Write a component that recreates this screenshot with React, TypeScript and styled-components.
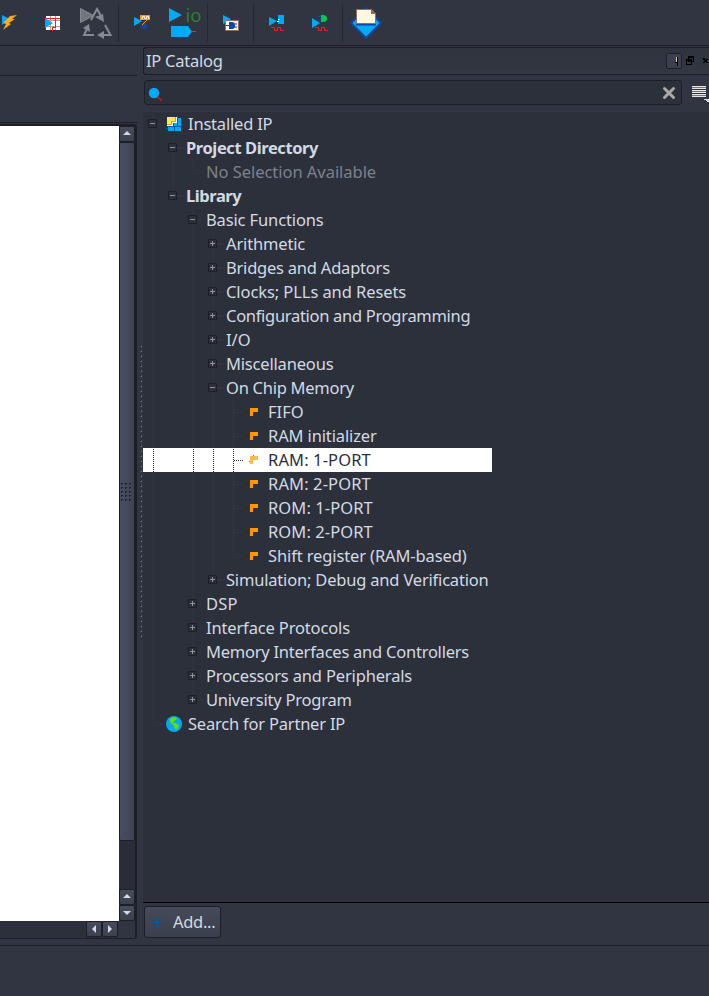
import React from "react";
import styled, { createGlobalStyle, css } from "styled-components";

const c = {
  bg: "#313541",
  tree: "#2c303b",
  edge: "#1c1f27",
  text: "#d3dae3",
  dim: "#7d818b",
  guide: "#363a45",
  blue: "#03a9f4",
};

const Global = createGlobalStyle`
  * { box-sizing: border-box; }
  body { margin: 0; background: ${c.bg}; overflow: hidden; }
  svg { display: block; flex: none; }
`;

const Window = styled.div`
  width: 709px;
  height: 996px;
  overflow: hidden;
  display: flex;
  flex-direction: column;
  background: ${c.bg};
  color: ${c.text};
  font: 16.5px/24px "Noto Sans", sans-serif;
`;
const Toolbar = styled.header`
  height: 46px;
  flex: none;
  display: flex;
  border-bottom: 1px solid ${c.edge};
`;
const Separator = styled.i`
  width: 1px;
  height: 38px;
  margin-top: 4px;
  background: #252832;
`;
const Workspace = styled.main`
  height: 900px;
  flex: none;
  display: flex;
  border-bottom: 1px solid ${c.edge};
`;
const LeftPane = styled.section`
  width: 137px;
  display: flex;
  flex-direction: column;
  padding-bottom: 7px;
`;
const TabStrip = styled.div<{ $h: number }>`
  height: ${(p) => p.$h}px;
  flex: none;
  border-bottom: 1px solid ${c.edge};
`;
const Editor = styled.div`
  flex: 1;
  margin-top: 1px;
  display: grid;
  grid-template-columns: 119px 16px;
  grid-template-rows: 795px 17px;
  border: solid ${c.edge};
  border-width: 2px 2px 1px 0;
  border-radius: 0 3px 3px 0;
`;
const Paper = styled.div`
  background: #fff;
`;
const VBar = styled.div`
  display: flex;
  flex-direction: column;
  background: #2a2d37;
`;
const HBar = styled.div`
  display: flex;
  justify-content: flex-end;
  padding-right: 1px;
  background: #2c303a;
`;
const ScrollButton = styled.button`
  width: 16px;
  height: 16px;
  padding: 0;
  flex: none;
  display: grid;
  place-items: center;
  border: 1px solid ${c.edge};
  border-radius: 2px;
  background: linear-gradient(#464c5b, #3c414f);
`;
const Thumb = styled.div`
  height: 699px;
  margin-bottom: 48px;
  display: grid;
  place-items: center;
  border: 1px solid ${c.edge};
  border-radius: 2px;
  background: linear-gradient(90deg, #475060, #3e4352);
`;
const Splitter = styled.div`
  width: 6px;
  flex: none;
  padding: 299px 0 0 2px;
`;
const Dock = styled.section`
  width: 566px;
  flex: none;
  display: flex;
  flex-direction: column;
  padding-top: 1px;
`;
const DockTitle = styled.div`
  height: 28px;
  flex: none;
  display: flex;
  align-items: center;
  padding-left: 2px;
  border: 1px solid ${c.edge};
  border-right: 0;
  border-radius: 3px 0 0 3px;
  background: linear-gradient(#2f333e, #333742);
`;
const TitleText = styled.span`
  flex: 1;
  letter-spacing: -0.25px;
`;
const SearchRow = styled.div`
  height: 37px;
  flex: none;
  display: flex;
  padding: 5px 0 7px 1px;
`;
const SearchBox = styled.div`
  width: 538px;
  display: flex;
  align-items: center;
  justify-content: space-between;
  padding: 0 5px 0 3px;
  border: 1px solid ${c.edge};
  border-radius: 3px;
  background: ${c.tree};
`;
const Tree = styled.div`
  flex: 1;
  background: ${c.tree};
  border-bottom: 1px solid #000;
`;
const Row = styled.div<{ $selected?: boolean }>`
  height: 24px;
  display: flex;
  align-items: center;
  white-space: pre;
  color: ${c.text};
  --guide: ${c.guide};
  ${(p) =>
    p.$selected &&
    css`
      width: 349px;
      color: #2d303b;
      background: #fff;
      --guide: #2d303b;
    `}
`;
const Cell = styled.span<{ $line: string; $stub?: boolean }>`
  width: 20px;
  height: 24px;
  flex: none;
  display: grid;
  place-items: center;
  background-repeat: no-repeat;
  background-image:
    repeating-linear-gradient(to bottom, transparent 0 1px, var(--guide) 1px 2px),
    repeating-linear-gradient(to right, var(--guide) 0 1px, transparent 1px 2px);
  background-size:
    1px ${(p) => (p.$line === "full" ? 24 : p.$line === "half" ? 12 : 0)}px,
    ${(p) => (p.$stub ? 9 : 0)}px 1px;
  background-position: 10px 0, 11px 12px;
`;
const Toggle = styled.span`
  width: 9px;
  height: 9px;
  display: grid;
  place-items: center;
  margin: -1px 1px 0 0;
  background: #2c303b;
  border: 1px solid ${c.edge};
  border-radius: 1px;
`;
const Label = styled.span<{ $tone?: string; $gap: number; $spacing: number }>`
  margin-left: ${(p) => p.$gap}px;
  letter-spacing: ${(p) => p.$spacing}px;
  ${(p) => p.$tone === "bold" && "font-weight: 700;"}
  ${(p) => p.$tone === "dim" && `color: ${c.dim};`}
`;
const IconSlot = styled.span`
  margin-left: 3px;
`;
const Footer = styled.div`
  height: 42px;
  flex: none;
  padding: 3px 0 0 1px;
`;
const AddButton = styled.button`
  width: 77px;
  height: 32px;
  display: flex;
  align-items: center;
  gap: 11px;
  padding: 0 0 0 6px;
  color: ${c.text};
  font: inherit;
  letter-spacing: -0.3px;
  border: 1px solid ${c.edge};
  border-radius: 3px;
  background: linear-gradient(#454b5a, #3a3f4c);
`;

const Tool = ({ x, w, children }: { x: number; w: number; children: React.ReactNode }) => (
  <svg width={w} height={45} viewBox={`${x} 0 ${w} 45`}>{children}</svg>
);

const arrows: Record<string, string> = {
  up: "M0 5 4 1 8 5z",
  down: "M0 2 8 2 4 6z",
  left: "M6 0 2 4 6 8z",
  right: "M2 0 6 4 2 8z",
};
const Arrow = ({ dir }: { dir: string }) => (
  <ScrollButton aria-label={`scroll ${dir}`}>
    <svg width="8" height="8" viewBox="0 0 8 8"><path d={arrows[dir]} fill={c.text} /></svg>
  </ScrollButton>
);

const Icons: Record<string, React.ReactNode> = {
  installed: (
    <svg width="16" height="16" shapeRendering="crispEdges">
      <path d="M2 6h13v9H2z" fill={c.blue} />
      <path d="M12 2h3v4h-3z" fill={c.blue} />
      <path d="M4.500 0v1M11.500 0v2M0 12.500h2M11.500 7v3.500h-3V15M11 10.500h4" stroke="#0759ad" fill="none" />
      <path d="M1 1h11v6H8v4H1z" fill="#0759ad" />
      <path d="M1 1h10v6H7v3H1z" fill="#fff" />
      <path d="M1 1h9v5H6v3H1z" fill="#ff9800" />
      <path d="M1 1h8v4H5v3H1z" fill="#ffeb3b" />
    </svg>
  ),
  globe: (
    <svg width="16" height="16" viewBox="0 0 16 16">
      <circle cx="8" cy="8" r="8" fill={c.blue} />
      <path d="M4 3 7 1l4 1-1 2-2 1-1 2 3 0 3 2-1 3-2 2-1-1-1-3-2-2-2-2z" fill="#64dd17" />
    </svg>
  ),
  part: (
    <svg width="16" height="16" shapeRendering="crispEdges">
      <path d="M8 3h1v1H8zM3 9h1v1H3z" fill="#29435f" />
      <path d="M4 4h8v4H7v4H4z" fill="#ff9800" />
    </svg>
  ),
  partSelected: (
    <svg width="16" height="16" shapeRendering="crispEdges">
      <path d="M7 3h1v1H7zM3 9h1v1H3z" fill="#718db0" />
      <path d="M4 4h8v4H7v4H4z" fill="#ffb84d" />
    </svg>
  ),
};

type Node = { t: string; lines: string; ls?: number; toggle?: string; icon?: string; tone?: string; sel?: boolean };
// lines: one letter per 20px level — f full guide, h ends at mid row, n none
const nodes: Node[] = [
  { t: "Installed IP", lines: "f", ls: -0.2, toggle: "-", icon: "installed" },
  { t: "Project Directory", lines: "ff", ls: -0.41, toggle: "-", tone: "bold" },
  { t: "No Selection Available", lines: "ffh", ls: -0.04, tone: "dim" },
  { t: "Library", lines: "fh", ls: -0.43, toggle: "-", tone: "bold" },
  { t: "Basic Functions", lines: "fnf", ls: -0.13, toggle: "-" },
  { t: "Arithmetic", lines: "fnff", ls: -0.16, toggle: "+" },
  { t: "Bridges and Adaptors", lines: "fnff", ls: -0.22, toggle: "+" },
  { t: "Clocks; PLLs and Resets", lines: "fnff", ls: -0.08, toggle: "+" },
  { t: "Configuration and Programming", lines: "fnff", ls: -0.3, toggle: "+" },
  { t: "I/O", lines: "fnff", toggle: "+" },
  { t: "Miscellaneous", lines: "fnff", ls: -0.18, toggle: "+" },
  { t: "On Chip Memory", lines: "fnff", ls: -0.26, toggle: "-" },
  { t: "FIFO", lines: "fnfff", icon: "part" },
  { t: "RAM initializer", lines: "fnfff", ls: -0.13, icon: "part" },
  { t: "RAM: 1-PORT", lines: "fnfff", ls: 0.12, icon: "partSelected", sel: true },
  { t: "RAM: 2-PORT", lines: "fnfff", ls: 0.12, icon: "part" },
  { t: "ROM: 1-PORT", lines: "fnfff", ls: 0.09, icon: "part" },
  { t: "ROM: 2-PORT", lines: "fnfff", ls: 0.09, icon: "part" },
  { t: "Shift register (RAM-based)", lines: "fnffh", ls: -0.12, icon: "part" },
  { t: "Simulation; Debug and Verification", lines: "fnfh", ls: -0.19, toggle: "+" },
  { t: "DSP", lines: "fnf", ls: 0.2, toggle: "+" },
  { t: "Interface Protocols", lines: "fnf", ls: -0.15, toggle: "+" },
  { t: "Memory Interfaces and Controllers", lines: "fnf", ls: -0.24, toggle: "+" },
  { t: "Processors and Peripherals", lines: "fnf", ls: -0.16, toggle: "+" },
  { t: "University Program", lines: "fnh", ls: -0.22, toggle: "+" },
  { t: "Search for Partner IP", lines: "h", ls: -0.21, icon: "globe" },
];
const kinds: Record<string, string> = { f: "full", h: "half", n: "none" };

const TreeRow = ({ n }: { n: Node }) => (
  <Row $selected={n.sel}>
    {n.lines.split("").map((l, i) => {
      const last = i === n.lines.length - 1;
      return (
        <Cell key={i} $line={kinds[l]} $stub={last}>
          {last && n.toggle && (
            <Toggle>
              <svg width="5" height="5" shapeRendering="crispEdges">
                <path d={n.toggle === "+" ? "M0 2.5h5M2.5 0v5" : "M0 2.5h5"} stroke="#8f949e" />
              </svg>
            </Toggle>
          )}
        </Cell>
      );
    })}
    {n.icon && <IconSlot>{Icons[n.icon]}</IconSlot>}
    <Label $tone={n.tone} $gap={n.icon ? 6 : 3} $spacing={n.ls ?? 0}>{n.t}</Label>
  </Row>
);

export default function App() {
  return (
    <Window>
      <Global />
      <Toolbar>
        <Tool x={0} w={32}>
          <path d="M2 15v10l8-6z" fill={c.blue} />
          <path d="M10 16 17 15 12 19 15 19 9 23 11 24 3 30 6 24 3 23z" fill="#f9a825" />
        </Tool>
        <Tool x={32} w={44}>
          <g shapeRendering="crispEdges">
            <path d="M46 16h14v14H46z" fill="#fff" />
            <path d="M50.500 16v14M55.500 16v14M46 20.500h14M46 26.500h14" stroke="#b99a94" />
            <path d="M46 18.500h9v9h-3v3M55 18.500h5M55.500 23v5" stroke="#f31b28" fill="none" />
          </g>
          <path d="M45 18v10l8-5z" fill={c.blue} />
        </Tool>
        <Tool x={76} w={42}>
          <path d="M80.500 8.500v14l13-7z" fill="#71757e" stroke="#858991" />
          <path d="M91 20 97 9 101 16M105 25l5.500 10H101M94 35H84L87 29" fill="none" stroke="#858991" strokeWidth="2" />
          <path d="m95 17 8-3 1 8zM83 28l6-4 1 8zM104 31v8l-7-4z" fill="#858991" />
        </Tool>
        <Separator />
        <Tool x={119} w={45}>
          <path d="M134 17v9l8-5z" fill={c.blue} />
          <path d="M140 15h10v5h-10z" fill="#ff9800" />
          <path d="M141 18.500h1.500v-2h2v2h2v-2h2v2h1" fill="none" stroke="#fff3df" />
          <path d="m144 21 4 5-4 4-4-4z" fill="#0d47a1" />
          <path d="m142 25 5-5" stroke="#ff9800" />
        </Tool>
        <Tool x={164} w={43}>
          <path d="M169 8v14l13-7z" fill={c.blue} />
          <path d="M171 26h17l4 5.500-4 5.500h-17z" fill={c.blue} />
          <path d="M191 31.500h5" stroke="#e12b3a" />
          <text x="185.500" y="22" fill="#2e7d32" fontFamily="Noto Sans" fontSize="18.500">io</text>
        </Tool>
        <Separator />
        <Tool x={208} w={45}>
          <path d="M223 15v9l8-5z" fill={c.blue} />
          <path d="M225.500 20.500h13v10h-13z" fill="#fff8e1" stroke="#8d6e63" />
          <path d="M226 25.500h4M234 24h3M234 27h3" stroke="#0d47a1" />
          <path d="M229 22h3q3 0 3 3.500t-3 3.500h-3z" fill="#0d47a1" />
        </Tool>
        <Separator />
        <Tool x={254} w={44}>
          <path d="M269 17v9l8-5z" fill={c.blue} />
          <path d="M278 15h6v9h-6z" fill={c.blue} />
          <path d="M278 19.500h1.500M277 21.500h2" stroke="#fff" />
          <path d="M271 27.500h3.500v3h3v-3h3v3h3.500" fill="none" stroke="#f31b28" />
        </Tool>
        <Tool x={298} w={44}>
          <path d="M312 18v10l8-5z" fill={c.blue} />
          <path d="M321 15h2q4 0 4 3.500t-4 3.500h-2z" fill="#00c853" />
          <path d="M318 16.500h3M318 20.500h3" stroke="#07539a" />
          <path d="M315 27.500h3.500v3h3v-3h3v3h3.500" fill="none" stroke="#f31b28" />
        </Tool>
        <Separator />
        <Tool x={343} w={46}>
          <path d="m366 8 15 15-15 15-15-15z" fill={c.blue} stroke="#0d47a1" strokeWidth="2" />
          <path d="M356 23h20v2.500h-20z" fill="#0d47a1" />
          <path d="M356.500 9.500h15l4 4v10h-19z" fill="#fff8e1" stroke="#8d6e63" />
          <path d="M371 9v5h5z" fill="#8d6e63" />
        </Tool>
      </Toolbar>
      <Workspace>
        <LeftPane>
          <TabStrip $h={30} />
          <TabStrip $h={47} />
          <Editor>
            <Paper />
            <VBar>
              <Arrow dir="up" />
              <Thumb>
                <svg width="12" height="18" shapeRendering="crispEdges">
                  {[0, 4, 8, 12, 16].map((y) => [0, 4, 8].map((x) => (
                    <path key={`${x}-${y}`} d={`M${x} ${y}h2v1h-1v1h-1z`} fill="#20232c" />
                  )))}
                </svg>
              </Thumb>
              <Arrow dir="up" />
              <Arrow dir="down" />
            </VBar>
            <HBar>
              <Arrow dir="left" />
              <Arrow dir="right" />
            </HBar>
          </Editor>
        </LeftPane>
        <Splitter>
          <svg width="3" height="294" shapeRendering="crispEdges">
            {Array.from({ length: 59 }, (_, i) => (
              <React.Fragment key={i}>
                <path d={`M1 ${i * 5}h2v2h-2z`} fill="#484d59" />
                <path d={`M2 ${i * 5 + 1}h1v1h-1z`} fill="#707580" />
                <path d={`M1 ${i * 5}h1v1h-1z`} fill="#20232c" />
              </React.Fragment>
            ))}
          </svg>
        </Splitter>
        <Dock>
          <DockTitle>
            <TitleText>IP Catalog</TitleText>
            <svg width="43" height="16" shapeRendering="crispEdges">
              <rect x="0.500" y="0.500" width="15" height="15" rx="2" fill="#3b404e" stroke={c.edge} />
              <path d="M10.500 4v5" stroke="#d5d0c8" />
              <path d="M11.500 4v9M9 9.500h3" stroke="#000" />
              <path d="M22.500 3.500h5v5h-5zM22 4h6M20.500 6.500h5v5h-5zM20 7h6" fill="none" stroke="#000" />
              <path d="M37 5h2v1h3v1h-1v2h1v1h-2v-1h-1v1h-2v-1h1v-2h-1z" fill="#000" />
            </svg>
          </DockTitle>
          <SearchRow>
            <SearchBox>
              <svg width="15" height="16" viewBox="0 0 15 16">
                <path d="m9 11.500 4.500 4" stroke="#b71c1c" strokeWidth="1.800" />
                <circle cx="6" cy="8" r="5.200" fill={c.blue} />
              </svg>
              <svg width="14" height="14" viewBox="0 0 14 14">
                <path d="m2.500 2.500 9 9M11.500 2.500l-9 9" stroke="#aaa9a6" strokeWidth="3" strokeLinecap="round" />
              </svg>
            </SearchBox>
            <svg width="27" height="25" shapeRendering="crispEdges">
              <path d="M10 7.500h14M10 11.500h14M10 15.500h14" stroke="#e4e4e0" strokeWidth="3" />
              <path d="M10 7.500h14M10 11.500h14M10 15.500h14" stroke="#777875" />
              <path d="M22 19h5v3h-2v-1h-1v-1h-2z" fill={c.text} />
            </svg>
          </SearchRow>
          <Tree>
            {nodes.map((n) => <TreeRow key={n.t} n={n} />)}
          </Tree>
          <Footer>
            <AddButton>
              <svg width="11" height="10" shapeRendering="crispEdges">
                <path d="M0 4h11v2H0zM5 0h2v10H5z" fill="#01579b" />
              </svg>
              Add...
            </AddButton>
          </Footer>
        </Dock>
      </Workspace>
    </Window>
  );
}
